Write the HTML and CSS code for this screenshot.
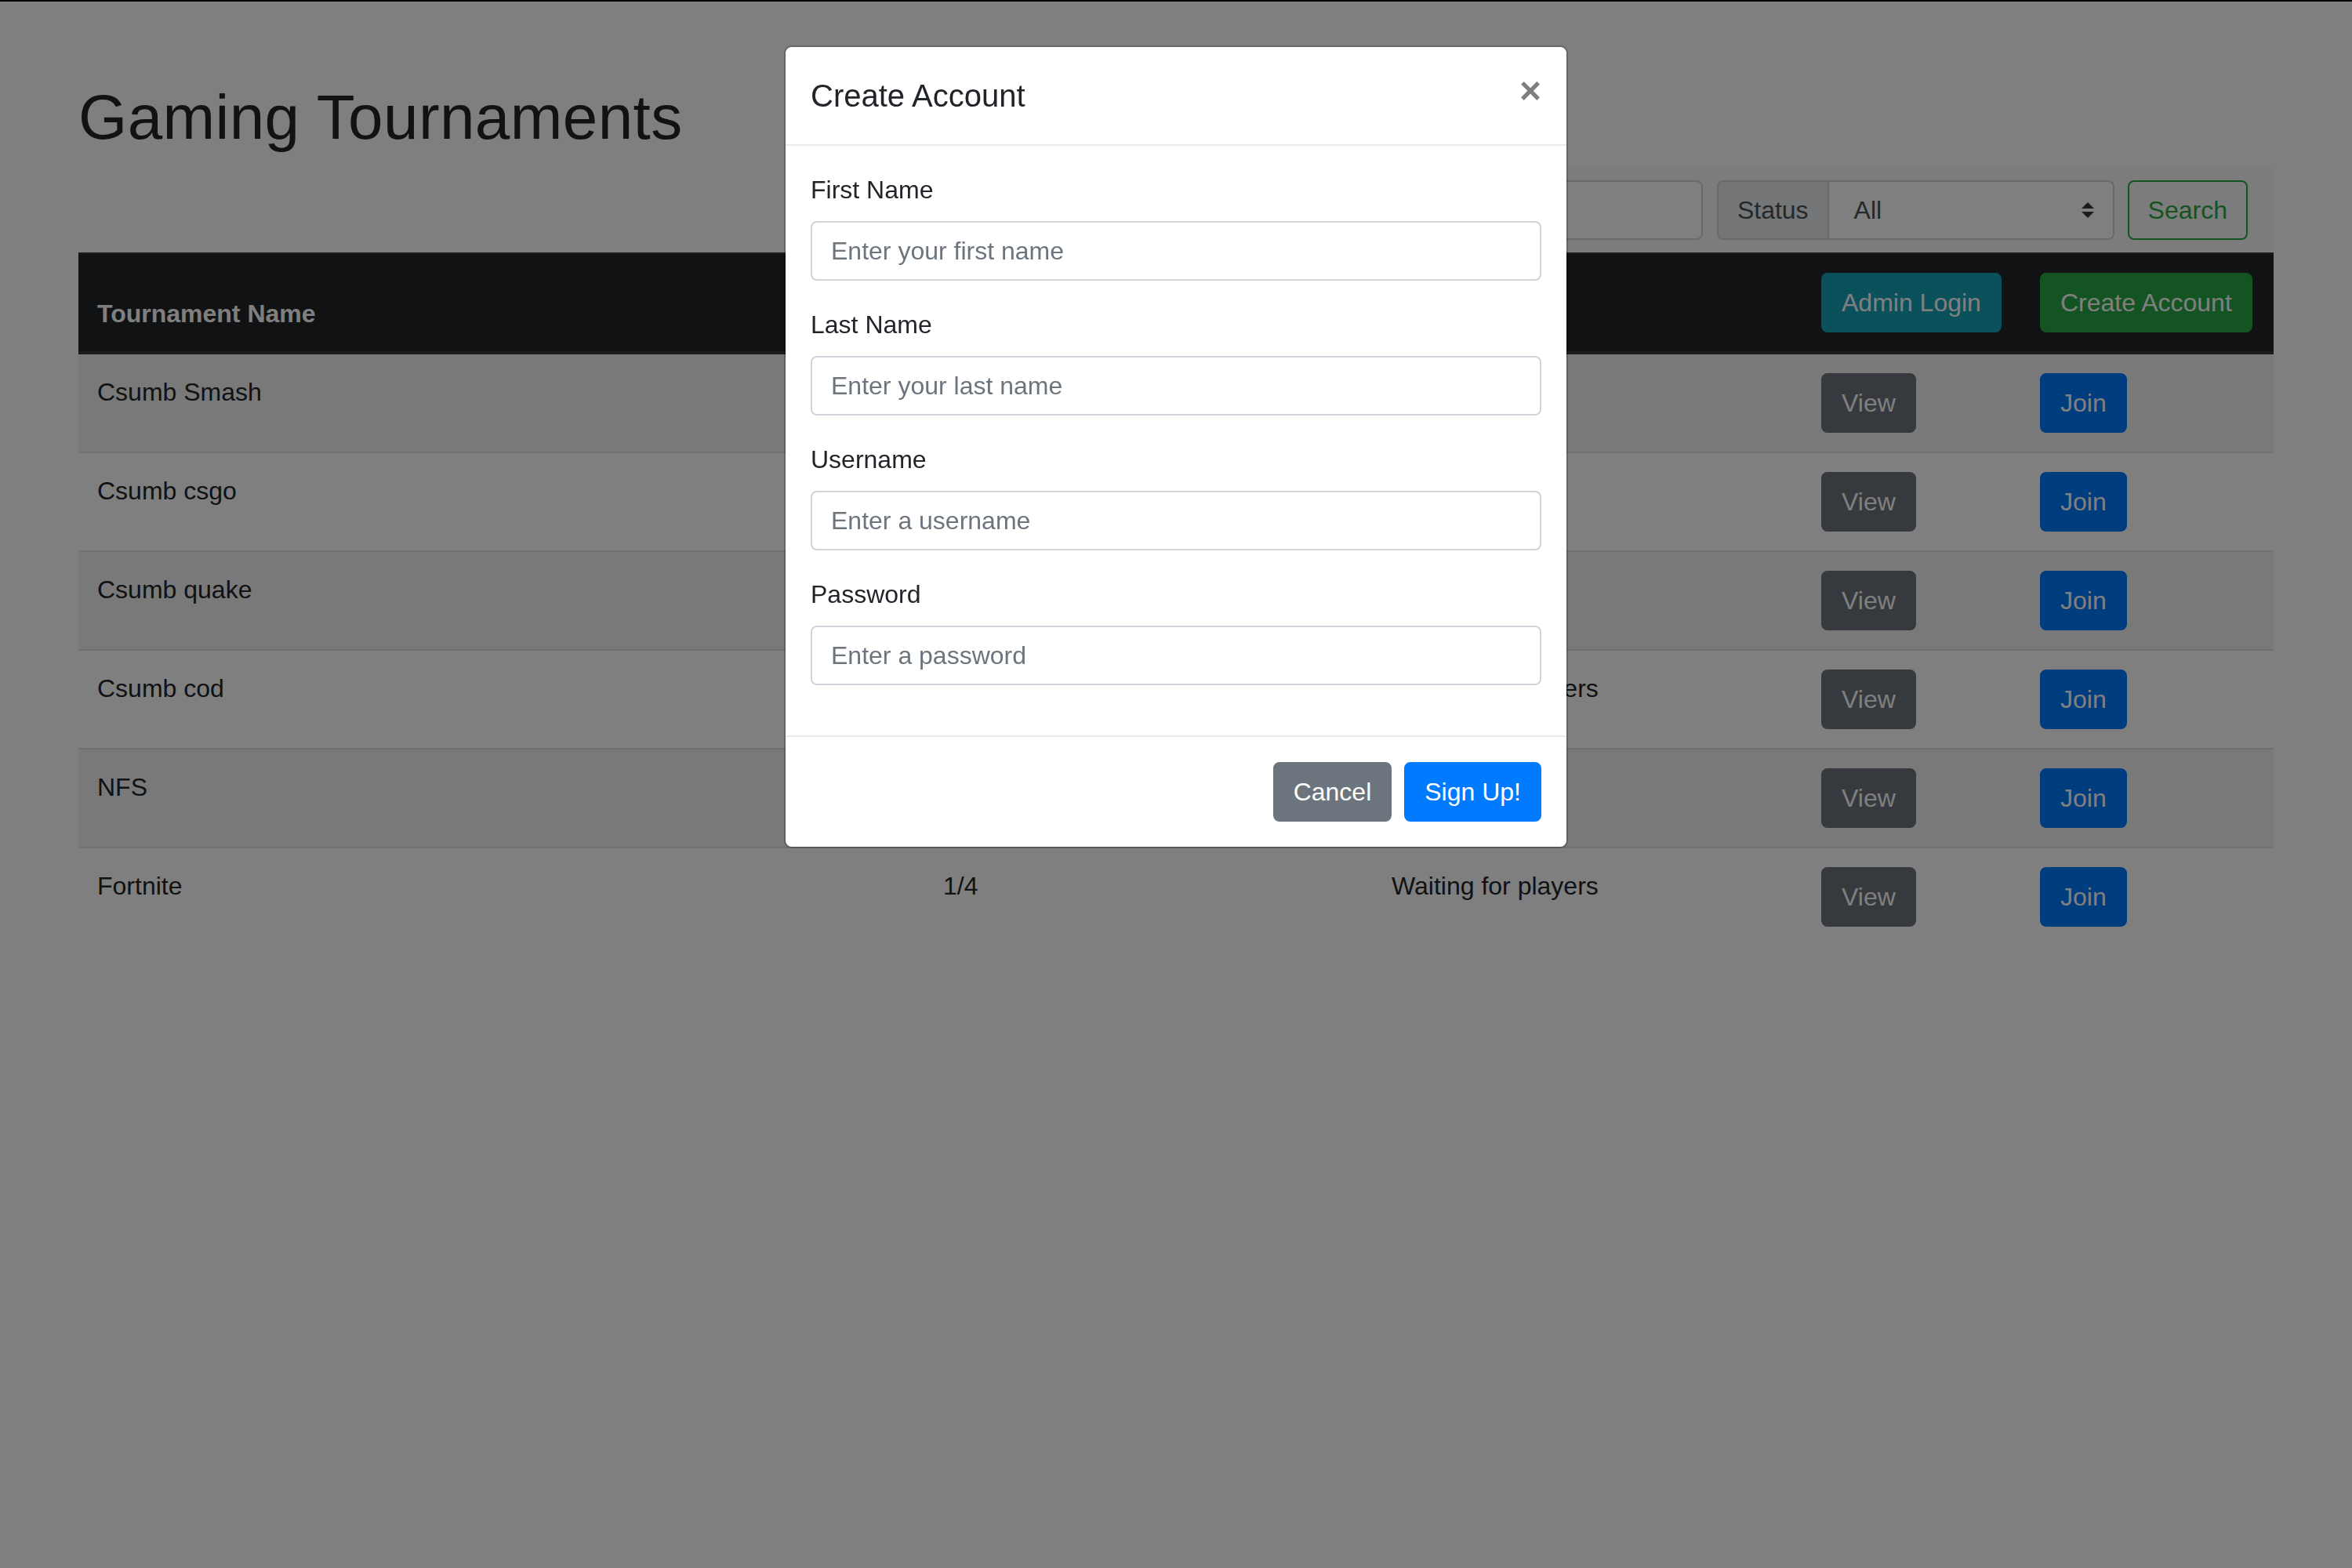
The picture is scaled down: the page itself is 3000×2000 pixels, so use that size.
FILE: index.html
```html
<!DOCTYPE html>
<html lang="en">
<head>
<meta charset="utf-8">
<title>Gaming Tournaments</title>
<link rel="stylesheet" href="styles.css">
</head>
<body>
<div class="topline"></div>
<main class="page">
  <h1 class="page-title">Gaming Tournaments</h1>
  <div class="filter-row">
    <nav class="filter-bar">
      <div class="input-group name-group">
        <span class="addon">Name</span>
        <input class="field" type="text">
      </div>
      <div class="input-group status-group">
        <span class="addon">Status</span>
        <div class="select">
          <span>All</span>
          <svg class="select-arrows" width="8" height="10" viewBox="0 0 4 5"><path fill="#343a40" d="M2 0L0 2h4zm0 5L0 3h4z"/></svg>
        </div>
      </div>
      <button class="btn btn-outline-success btn-search" type="button">Search</button>
    </nav>
  </div>
  <table class="tour-table">
    <colgroup>
      <col class="c-name"><col class="c-players"><col class="c-status"><col class="c-view"><col class="c-join">
    </colgroup>
    <thead>
      <tr>
        <th>Tournament Name</th>
        <th>Players</th>
        <th>Status</th>
        <th><button class="btn btn-info" type="button">Admin Login</button></th>
        <th><button class="btn btn-success" type="button">Create Account</button></th>
      </tr>
    </thead>
    <tbody>
      <tr><td>Csumb Smash</td><td>2/4</td><td>In progress</td><td><button class="btn btn-secondary" type="button">View</button></td><td><button class="btn btn-primary" type="button">Join</button></td></tr>
      <tr><td>Csumb csgo</td><td>3/4</td><td>In progress</td><td><button class="btn btn-secondary" type="button">View</button></td><td><button class="btn btn-primary" type="button">Join</button></td></tr>
      <tr><td>Csumb quake</td><td>4/4</td><td>Full</td><td><button class="btn btn-secondary" type="button">View</button></td><td><button class="btn btn-primary" type="button">Join</button></td></tr>
      <tr><td>Csumb cod</td><td>1/4</td><td>Waiting for players</td><td><button class="btn btn-secondary" type="button">View</button></td><td><button class="btn btn-primary" type="button">Join</button></td></tr>
      <tr><td>NFS</td><td>4/4</td><td></td><td><button class="btn btn-secondary" type="button">View</button></td><td><button class="btn btn-primary" type="button">Join</button></td></tr>
      <tr><td>Fortnite</td><td>1/4</td><td>Waiting for players</td><td><button class="btn btn-secondary" type="button">View</button></td><td><button class="btn btn-primary" type="button">Join</button></td></tr>
    </tbody>
  </table>
</main>

<div class="backdrop"></div>
<div class="modal">
  <div class="modal-dialog">
    <div class="modal-content">
      <div class="modal-header">
        <h5 class="modal-title">Create Account</h5>
        <button class="close" type="button" aria-label="Close">&times;</button>
      </div>
      <div class="modal-body">
        <div class="form-group">
          <label class="form-label">First Name</label>
          <input class="form-control" type="text" placeholder="Enter your first name">
        </div>
        <div class="form-group">
          <label class="form-label">Last Name</label>
          <input class="form-control" type="text" placeholder="Enter your last name">
        </div>
        <div class="form-group">
          <label class="form-label">Username</label>
          <input class="form-control" type="text" placeholder="Enter a username">
        </div>
        <div class="form-group">
          <label class="form-label">Password</label>
          <input class="form-control" type="password" placeholder="Enter a password">
        </div>
      </div>
      <div class="modal-footer">
        <button class="btn btn-secondary" type="button">Cancel</button>
        <button class="btn btn-primary" type="button">Sign Up!</button>
      </div>
    </div>
  </div>
</div>
</body>
</html>
```
FILE: styles.css
```css
html {
  zoom: 2;
}

body {
  margin: 0;
  font-family: "Liberation Sans", Arial, Helvetica, sans-serif;
  font-size: 16px;
  line-height: 1.5;
  color: #212529;
  background: #fff;
}

.topline {
  height: 1px;
  background: #000;
}

.page {
  padding: 50px 50px 0;
}

.page-title {
  margin: 0 0 8px;
  font-size: 40px;
  font-weight: 500;
  line-height: 1.2;
  letter-spacing: 0.2px;
}

/* filter bar */
.filter-row {
  display: flex;
  justify-content: flex-end;
}

.filter-bar {
  display: flex;
  align-items: center;
  padding: 8px 16.5px 8px 16px;
  background: #f8f9fa;
}

.input-group {
  display: flex;
  align-items: stretch;
}

.name-group {
  margin-right: 9px;
}

.addon {
  display: flex;
  align-items: center;
  padding: 6px 12px;
  border: 1px solid #ced4da;
  border-radius: 4px 0 0 4px;
  background: #e9ecef;
  color: #495057;
  line-height: 24px;
}

.field {
  box-sizing: border-box;
  width: 240px;
  height: 38px;
  padding: 6px 12px;
  font: inherit;
  color: #495057;
  background: #fff;
  border: 1px solid #ced4da;
  border-left: 0;
  border-radius: 0 4px 4px 0;
}

.select {
  box-sizing: border-box;
  width: 182px;
  height: 38px;
  display: flex;
  align-items: center;
  justify-content: space-between;
  padding: 6px 12px 6px 16px;
  color: #495057;
  background: #fff;
  border: 1px solid #ced4da;
  border-left: 0;
  border-radius: 0 4px 4px 0;
}

.select-arrows {
  display: block;
}

/* buttons */
.btn {
  display: inline-block;
  font: inherit;
  font-size: 16px;
  font-weight: 400;
  line-height: 1.5;
  padding: 6px 12px;
  border: 1px solid transparent;
  border-radius: 4px;
  color: #fff;
  white-space: nowrap;
  cursor: pointer;
  vertical-align: middle;
}

.btn-search {
  margin-left: 8.5px;
}

.btn-outline-success {
  color: #28a745;
  border-color: #28a745;
  background: transparent;
}

.btn-info {
  background: #17a2b8;
  border-color: #17a2b8;
}

.btn-success {
  background: #28a745;
  border-color: #28a745;
}

.btn-secondary {
  background: #6c757d;
  border-color: #6c757d;
}

.btn-primary {
  background: #007bff;
  border-color: #007bff;
}

/* table */
.tour-table {
  width: 100%;
  border-collapse: collapse;
  table-layout: fixed;
}

.c-name { width: 539.5px; }
.c-players { width: 286px; }
.c-status { width: 274px; }
.c-view { width: 139.5px; }
.c-join { width: 161px; }

.tour-table th,
.tour-table td {
  padding: 12px;
  vertical-align: top;
  text-align: left;
  border-top: 1px solid #dee2e6;
  white-space: nowrap;
}

.tour-table thead th {
  vertical-align: bottom;
  font-weight: 700;
  color: #fff;
  background: #212529;
  border-top-color: #32383e;
  border-bottom: 2px solid #32383e;
}

.tour-table tbody tr:nth-child(odd) {
  background: rgba(0, 0, 0, 0.05);
}

/* modal */
.backdrop {
  position: fixed;
  inset: 0;
  background: #000;
  opacity: 0.5;
}

.modal {
  position: fixed;
  inset: 0;
  overflow: hidden;
}

.modal-dialog {
  width: 500px;
  margin: 29px auto 0;
}

.modal-content {
  background: #fff;
  background-clip: padding-box;
  border: 1px solid rgba(0, 0, 0, 0.2);
  border-radius: 4.8px;
}

.modal-header {
  display: flex;
  align-items: flex-start;
  justify-content: space-between;
  padding: 16px;
  border-bottom: 1px solid #e9ecef;
}

.modal-title {
  margin: 0;
  font-size: 20px;
  font-weight: 500;
  line-height: 1.5;
}

.close {
  padding: 16px;
  margin: -16px -16px -16px auto;
  background: transparent;
  border: 0;
  font-family: inherit;
  font-size: 24px;
  font-weight: 700;
  line-height: 1;
  color: #000;
  text-shadow: 0 1px 0 #fff;
  opacity: 0.5;
  cursor: pointer;
}

.modal-body {
  padding: 16px;
}

.form-group {
  margin-bottom: 16px;
}

.form-label {
  display: inline-block;
  margin-bottom: 8px;
}

.form-control {
  display: block;
  box-sizing: border-box;
  width: 100%;
  height: 38px;
  padding: 6px 12px;
  font: inherit;
  font-size: 16px;
  line-height: 1.5;
  color: #495057;
  background: #fff;
  border: 1px solid #ced4da;
  border-radius: 4px;
}

.form-control::placeholder {
  color: #6c757d;
  opacity: 1;
}

.modal-footer {
  display: flex;
  align-items: center;
  justify-content: flex-end;
  gap: 8px;
  padding: 16px;
  border-top: 1px solid #e9ecef;
}
```
